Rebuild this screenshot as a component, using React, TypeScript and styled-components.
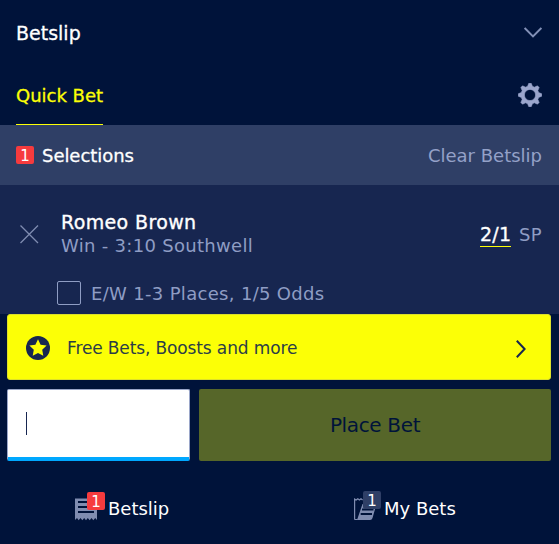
import React from "react";
import styled, { createGlobalStyle } from "styled-components";

const GlobalStyle = createGlobalStyle`
  * { box-sizing: border-box; }
  body { margin: 0; background: #00133a; font-family: Verdana, "DejaVu Sans", sans-serif; }
  button { font-family: inherit; border: 0; padding: 0; background: none; }
  svg { display: block; flex: none; }
`;

const Panel = styled.main`
  width: 559px;
  height: 544px;
  display: flex;
  flex-direction: column;
  overflow: hidden;
  background: #00133a;
  color: #fff;
`;

const Label = styled.span<{ $size?: number; $color?: string; $track?: number; $weight?: number; $drop?: number }>`
  font-size: ${(p) => p.$size ?? 18}px;
  line-height: 24px;
  margin-top: ${(p) => p.$drop ?? 0}px;
  color: ${(p) => p.$color ?? "#fff"};
  letter-spacing: ${(p) => p.$track ?? 0}px;
  -webkit-text-stroke: ${(p) => p.$weight ?? 0}px currentColor;
  white-space: nowrap;
`;

const Header = styled.header`
  height: 65px;
  padding: 0 17px 0 16px;
  display: flex;
  align-items: center;
  justify-content: space-between;
`;

const TabBar = styled.nav`
  height: 60px;
  padding: 0 17px 0 16px;
  display: flex;
  align-items: center;
  justify-content: space-between;
`;

const Tab = styled.div`
  width: 87px;
  height: 60px;
  display: flex;
  align-items: center;
  border-bottom: 1px solid #fcff06;
`;

const SelectionBar = styled.div`
  height: 60px;
  padding: 0 17px 0 16px;
  display: flex;
  align-items: center;
  gap: 8px;
  background: #2f3f66;
`;

const Spacer = styled.span`
  flex: 1;
`;

const Badge = styled.span<{ $muted?: boolean }>`
  width: 18px;
  height: 18px;
  border-radius: 2px;
  background: ${(p) => (p.$muted ? "#2f3f66" : "#f63b3e")};
  font-size: 15px;
  line-height: 20px;
  text-align: center;
  color: #fff;
`;

const Selection = styled.section`
  height: 129px;
  padding: 25px 17px 0 20px;
  background: #172650;
`;

const SelectionRow = styled.div`
  height: 48px;
  display: flex;
  align-items: center;
`;

const Names = styled.div`
  flex: 1;
  margin-left: 22px;
  display: flex;
  flex-direction: column;
`;

const Price = styled.div`
  width: 31px;
  height: 26px;
  margin-right: 8px;
  border-bottom: 1px solid #fcff06;
  display: flex;
`;

const EachWay = styled.label`
  margin: 23px 0 0 37px;
  height: 24px;
  display: flex;
  align-items: center;
  gap: 10px;
`;

const Checkbox = styled.span`
  width: 24px;
  height: 24px;
  border: 1px solid #8f9dc4;
  border-radius: 2px;
`;

const Actions = styled.div`
  padding: 0 8px 0 7px;
  display: flex;
  flex-direction: column;
  gap: 9px;
`;

const Promo = styled.button`
  height: 66px;
  padding: 2px 24px 0 18px;
  display: flex;
  align-items: center;
  gap: 17px;
  border: 1px solid #dde02a;
  border-radius: 3px;
  background: #fcff06;
`;

const StakeRow = styled.div`
  display: flex;
  gap: 9px;
`;

const Stake = styled.div`
  width: 183px;
  height: 72px;
  padding: 22px 0 0 18px;
  border: 1px solid #9aa6c9;
  border-bottom: 4px solid #00a8ff;
  border-radius: 2px;
  background: #fff;
`;

const Caret = styled.div`
  width: 1px;
  height: 23px;
  background: #172650;
`;

const PlaceBet = styled.button`
  flex: 1;
  height: 72px;
  border-radius: 2px;
  background: #566629;
`;

const Footer = styled.footer`
  height: 83px;
  display: flex;
  padding: 31px 0 0 75px;
`;

const FooterLink = styled.div<{ $width: number }>`
  width: ${(p) => p.$width}px;
  height: 30px;
  display: flex;
`;

const IconBox = styled.div<{ $width: number }>`
  position: relative;
  width: ${(p) => p.$width}px;
  height: 30px;
`;

const IconBadge = styled(Badge)<{ $left: number; $top: number }>`
  position: absolute;
  left: ${(p) => p.$left}px;
  top: ${(p) => p.$top}px;
`;

// Eight tapered teeth around a ring, centred on (12, 12).
const gearPath = (() => {
  const pts: string[] = [];
  for (let i = 0; i < 8; i++) {
    const base = (i * Math.PI) / 4;
    const corners: [number, number][] = [[-0.27, 9], [-0.1, 11.8], [0.1, 11.8], [0.27, 9]];
    corners.forEach(([a, r]) => {
      pts.push(`${(12 + r * Math.sin(base + a)).toFixed(2)} ${(12 - r * Math.cos(base + a)).toFixed(2)}`);
    });
  }
  return `M${pts.join("L")}Z M12 6.4a5.6 5.6 0 1 0 0 11.2a5.6 5.6 0 1 0 0-11.2Z`;
})();

export default function App() {
  return (
    <>
      <GlobalStyle />
      <Panel>
        <Header>
          <Label $size={19} $weight={0.3} $drop={1}>Betslip</Label>
          <svg width="18" height="12" viewBox="0 0 18 12" fill="none" stroke="#8290b6" strokeWidth="2">
            <path d="M.6 1 9 9.4 17.4 1" />
          </svg>
        </Header>
        <TabBar>
          <Tab><Label $color="#fcff06" $weight={0.3} $drop={2}>Quick Bet</Label></Tab>
          <svg width="24" height="24" viewBox="0 0 24 24" fill="#9ba6cc">
            <path fillRule="evenodd" stroke="#9ba6cc" strokeWidth=".6" strokeLinejoin="round" d={gearPath} />
          </svg>
        </TabBar>
        <SelectionBar>
          <Badge>1</Badge>
          <Label $weight={0.3} $drop={2} $track={-0.05}>Selections</Label>
          <Spacer />
          <Label $color="#94a1c8" $drop={2}>Clear Betslip</Label>
        </SelectionBar>
        <Selection>
          <SelectionRow>
            <svg width="19" height="19" viewBox="0 0 19 19" stroke="#7f8cb0" strokeWidth="1.3">
              <path d="M.5.5 18 18M18 .5.5 18" />
            </svg>
            <Names>
              <Label $size={19} $weight={0.35} $track={0.36}>Romeo Brown</Label>
              <Label $color="#8f9dc4" $track={0.3}>Win - 3:10 Southwell</Label>
            </Names>
            <Price><Label $size={19} $weight={0.35} $track={0.3} $drop={1}>2/1</Label></Price>
            <Label $color="#8f9dc4" $track={0.4} $drop={2}>SP</Label>
          </SelectionRow>
          <EachWay>
            <Checkbox />
            <Label $color="#8f9dc4" $track={0.32} $drop={2}>E/W 1-3 Places, 1/5 Odds</Label>
          </EachWay>
        </Selection>
        <Actions>
          <Promo>
            <svg width="24" height="24" viewBox="0 0 24 24">
              <circle cx="12" cy="12" r="12" fill="#172650" />
              <path fill="#fcff06" d="m12 3.2 2.6 5.5 6 .8-4.4 4.2 1.1 6.1-5.3-2.9-5.3 2.9 1.1-6.1L3.4 9.5l6-.8Z" />
            </svg>
            <Label $size={17} $color="#2b3d47" $track={-0.13}>Free Bets, Boosts and more</Label>
            <Spacer />
            <svg width="10" height="20" viewBox="0 -2 10 20" fill="none" stroke="#172650" strokeWidth="2">
              <path d="m.8.8 7.8 8.2-7.8 8.2" />
            </svg>
          </Promo>
          <StakeRow>
            <Stake><Caret /></Stake>
            <PlaceBet><Label $size={20} $color="#00133a" $track={-0.35}>Place Bet</Label></PlaceBet>
          </StakeRow>
        </Actions>
        <Footer>
          <FooterLink $width={279}>
            <IconBox $width={33}>
              <svg width="23" height="30" viewBox="0 0 23 30">
                <path fill="#7f8cb0" d="M0 6.5H22V28L20.2 26 18.3 28.2 16.5 26 14.7 28.2 12.8 26 11 28.2 9.2 26 7.3 28.2 5.5 26 3.7 28.2 2 26 0 28Z" />
                <path stroke="#00133a" strokeWidth="2" d="M3 10H19M3 15H19M3 20H19" />
              </svg>
              <IconBadge $left={12} $top={0}>1</IconBadge>
            </IconBox>
            <Label $drop={5}>Betslip</Label>
          </FooterLink>
          <FooterLink $width={130}>
            <IconBox $width={30}>
              <svg width="24" height="30" viewBox="0 0 24 30">
                <path fill="none" stroke="#7f8cb0" strokeWidth="1.2" d="M3.5 27.5H1Q.6 27.5.6 27V7L2.2 8 3.8 6.7 5.4 8 7 6.7 8.6 8" />
                <path fill="#7f8cb0" d="M8.5 12H22.5L18.5 26Q18 28 16 28H3Z" />
                <path stroke="#00133a" strokeWidth="1.8" d="M8 17.5H19.5M6.7 22H18" />
              </svg>
              <IconBadge $muted $left={9} $top={-1}>1</IconBadge>
            </IconBox>
            <Label $drop={5}>My Bets</Label>
          </FooterLink>
        </Footer>
      </Panel>
    </>
  );
}
